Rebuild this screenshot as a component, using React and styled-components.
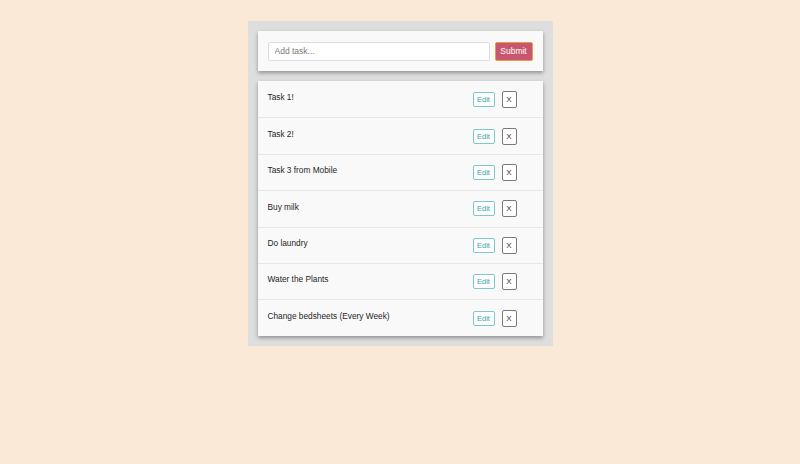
import React from 'react'
import styled, { createGlobalStyle } from 'styled-components';

const GlobalStyle = createGlobalStyle`
body {
  margin: 0;
  background: #fae9d7;
  font-family: "Liberation Sans", Arial, sans-serif;
}
`;

const StyledTodoApp = styled.div`
width: 305px;
margin: 21px auto 0 auto;
padding: 10px;
box-sizing: border-box;
background: #dedede;
display: flex;
flex-direction: column;
gap: 10px;
`;

const Card = styled.div`
background: #f9f9f9;
box-shadow: 0 2px 4px rgba(0, 0, 0, 0.35);
`;

const TaskForm = styled.form`
display: flex;
align-items: center;
gap: 5px;
padding: 10px;
height: 40px;
box-sizing: border-box;

input{
  flex: 1;
  height: 19px;
  box-sizing: border-box;
  border: 1px solid #d9dde2;
  border-radius: 2px;
  background: #fff;
  padding: 0 6px;
  font-family: inherit;
  font-size: 8.5px;
  color: #333;
  outline: none;
}
input::placeholder{
  color: #7a7a7a;
}
`;

const SubmitButton = styled.button`
width: 38px;
height: 19px;
padding: 0;
border: 1px solid #e0a045;
border-radius: 2px;
background: #c9566e;
color: #fff;
font-family: inherit;
font-size: 8.5px;
`;

const TaskRow = styled.div`
display: flex;
align-items: center;
height: 36.4px;
box-sizing: border-box;
padding: 0 26px 0 10px;
border-top: ${p => p.$first ? 'none' : '1px solid #e7e7e7'};

.label{
  flex: 1;
  align-self: flex-start;
  padding-top: 10.5px;
  font-size: 8.3px;
  color: #1e1e1e;
}
`;

const RowButton = styled.button`
box-sizing: border-box;
padding: 0;
background: #fff;
border-radius: 2px;
font-family: inherit;
width: ${p => p.$edit ? '22px' : '15px'};
height: ${p => p.$edit ? '15px' : '17px'};
margin-left: ${p => p.$edit ? '0' : '7px'};
border: 1px solid ${p => p.$edit ? '#7cc8d0' : '#7a7a7a'};
color: ${p => p.$edit ? '#3aa3ae' : '#333'};
font-size: ${p => p.$edit ? '7.5px' : '8px'};
`;

const tasks = [
  'Task 1!',
  'Task 2!',
  'Task 3 from Mobile',
  'Buy milk',
  'Do laundry',
  'Water the Plants',
  'Change bedsheets (Every Week)',
];

const App = () => {

  return (
    <>
      <GlobalStyle />
      <StyledTodoApp>

        <Card>
          <TaskForm onSubmit={e => e.preventDefault()}>
            <input type="text" placeholder="Add task..." />
            <SubmitButton type="submit">Submit</SubmitButton>
          </TaskForm>
        </Card>

        <Card>
          {tasks.map((task, i) => (
            <TaskRow key={task} $first={i === 0}>
              <div className="label">{task}</div>
              <RowButton $edit>Edit</RowButton>
              <RowButton>X</RowButton>
            </TaskRow>
          ))}
        </Card>

      </StyledTodoApp>
    </>
  )
}

export default App
